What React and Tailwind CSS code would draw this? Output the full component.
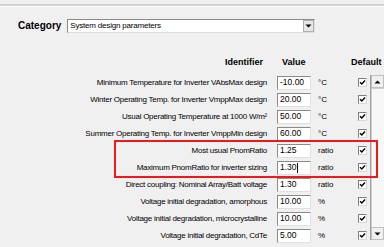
import React from 'react';

const rows = [
  { label: 'Minimum Temperature for Inverter VAbsMax design', value: '-10.00', unit: '°C' },
  { label: 'Winter Operating Temp. for Inverter VmppMax design', value: '20.00', unit: '°C' },
  { label: 'Usual Operating Temperature at 1000 W/m²', value: '50.00', unit: '°C' },
  { label: 'Summer Operating Temp. for Inverter VmppMin design', value: '60.00', unit: '°C' },
  { label: 'Most usual PnomRatio', value: '1.25', unit: 'ratio' },
  { label: 'Maximum PnomRatio for inverter sizing', value: '1.30', unit: 'ratio', caret: true },
  { label: 'Direct coupling: Nominal Array/Batt voltage', value: '1.30', unit: 'ratio' },
  { label: 'Voltage initial degradation, amorphous', value: '10.00', unit: '%' },
  { label: 'Voltage initial degradation, microcrystalline', value: '10.00', unit: '%' },
  { label: 'Voltage initial degradation, CdTe', value: '5.00', unit: '%' },
];

const CheckBox = () => (
  <div className="w-[9px] h-[9px] bg-white border-t border-l border-[#808080] border-b border-r border-b-[#d8d8d8] border-r-[#d8d8d8] flex items-center justify-center">
    <svg width="7" height="7" viewBox="0 0 7 7">
      <path d="M1 3.2 L2.8 5 L6 1.5" stroke="#000" strokeWidth="1.4" fill="none" />
    </svg>
  </div>
);

const Arrow = ({ up }) => (
  <svg width="7" height="4" viewBox="0 0 7 4">
    <path d={up ? 'M0.5 3.5 L3.5 0.5 L6.5 3.5 Z' : 'M0.5 0.5 L3.5 3.5 L6.5 0.5 Z'} fill="#000" />
  </svg>
);

export default function App() {
  return (
    <div className="w-[384px] h-[247px] bg-[#f0f0f0] overflow-hidden text-black font-['Liberation_Sans',Arial,sans-serif]">
      <div className="pt-[4px]">
        <div className="h-[2px] bg-[#d2d2d2]" />
        <div className="h-[1px] bg-white" />
      </div>

      {/* Category selector */}
      <div className="mt-[12px] flex items-center h-[14px]">
        <div className="pl-[18px] text-[10px] font-bold leading-none">Category</div>
        <div className="ml-[6px] w-[248px] h-[14px] bg-white border border-[#8a8a8a] border-b-[#dcdcdc] border-r-[#dcdcdc] flex items-center">
          <span className="pl-[2px] text-[8px] leading-none tracking-[-0.2px] flex-1">System design parameters</span>
          <div className="w-[11px] h-[12px] bg-[#e6e6e6] border border-[#b0b0b0] flex items-center justify-center">
            <Arrow />
          </div>
        </div>
      </div>

      {/* Column headers */}
      <div className="mt-[23px] flex items-center h-[12px] text-[9px] font-bold leading-none">
        <div className="w-[263px] text-right">Identifier</div>
        <div className="ml-[19px] w-[69px]">Value</div>
        <div>Default</div>
      </div>

      {/* Parameter rows */}
      <div className="mt-[6px] flex">
        <div className="relative w-[372px]">
          {rows.map((r, i) => (
            <div key={i} className="flex items-center h-[17px]">
              <div className="w-[267px] text-right text-[8px] tracking-[-0.25px] leading-none whitespace-nowrap">
                {r.label}
              </div>
              <div className="ml-[10px] w-[34px] h-[14px] bg-white border border-[#8a8a8a] border-b-[#e0e0e0] border-r-[#e0e0e0] flex items-center">
                <span className="pl-[2px] text-[8.5px] leading-none">{r.value}</span>
                {r.caret && <span className="w-[1px] h-[10px] bg-black" />}
              </div>
              <div className="ml-[7px] w-[40px] text-[8px] leading-none">{r.unit}</div>
              <CheckBox />
            </div>
          ))}
          <div className="absolute left-[114px] top-[66px] w-[264px] h-[38px] border-2 border-[#f01818]" />
        </div>

        {/* Scrollbar */}
        <div className="mt-[1px] w-[14px] h-[165px] border-l border-[#a0a0a0] bg-[#f4f4f4] flex flex-col">
          <div className="h-[13px] bg-[#f0f0f0] border border-[#c0c0c0] flex items-center justify-center">
            <Arrow up />
          </div>
          <div className="flex-1 border-t border-l border-[#d0d0d0] bg-[#f7f7f7]" />
          <div className="h-[13px] bg-[#f0f0f0] border border-[#c0c0c0] flex items-center justify-center">
            <Arrow />
          </div>
        </div>
      </div>
    </div>
  );
}
